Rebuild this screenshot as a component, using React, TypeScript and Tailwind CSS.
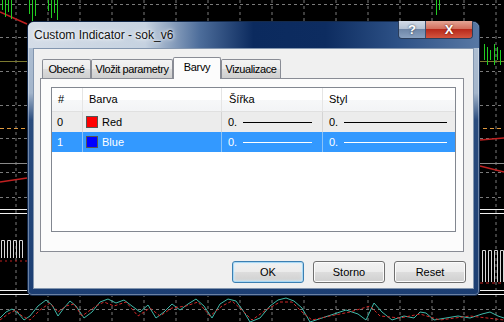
const gridX = Array.from({ length: 16 }, (_, i) => 16 + i * 32);
const gridY = [4, 37, 71, 105, 138, 172, 197, 309];

const wave =
  "M0,318 L6,312 L12,309 L18,313 L24,320 L30,316 L38,306 L46,300 L52,305 L58,316 L64,308 L70,301 L76,306 L84,318 L92,312 L100,302 L108,299 L116,303 L124,300 L132,306 L140,312 L148,305 L156,318 L164,312 L172,304 L180,310 L188,304 L196,299 L204,306 L212,318 L220,304 L228,299 L236,301 L244,312 L250,322 L260,318 L270,306 L278,300 L286,298 L294,301 L302,308 L310,322 L322,318 L334,314 L346,310 L358,314 L366,320 L374,303 L382,312 L392,320 L404,316 L414,318 L420,312 L426,313 L434,320 L446,318 L458,316 L470,318 L482,314 L490,312 L498,316 L504,318";
const waveRed =
  "M0,320 L8,314 L16,310 L22,316 L30,320 L40,310 L50,303 L58,312 L66,306 L74,304 L82,316 L96,306 L104,302 L114,306 L126,302 L138,316 L150,308 L160,316 L172,308 L186,306 L198,302 L210,316 L222,306 L232,301 L242,310 L252,320 L266,310 L280,302 L292,302 L302,312 L312,320 L330,316 L350,312 L370,306 L380,316 L400,318 L420,314 L440,320 L470,316 L504,320";

function ChartBackdrop() {
  return (
    <svg className="absolute inset-0" width="504" height="322" viewBox="0 0 504 322">
      <rect width="504" height="322" fill="#000" />
      {gridX.map((x) => (
        <line key={`v${x}`} x1={x} y1={0} x2={x} y2={322} stroke="#7a7a7a" strokeDasharray="3 3" strokeWidth={1} />
      ))}
      {gridY.map((y) => (
        <line key={`h${y}`} x1={0} y1={y + 0.5} x2={504} y2={y + 0.5} stroke="#7a7a7a" strokeDasharray="3 3" strokeWidth={1} />
      ))}
      <line x1={0} y1={61.5} x2={504} y2={61.5} stroke="#7c7a30" />
      <line x1={0} y1={128.5} x2={504} y2={128.5} stroke="#e09a40" strokeDasharray="4 3" />
      <line x1={0} y1={163.5} x2={504} y2={163.5} stroke="#8a8a8a" />
      <path d="M0,182 L27,178" stroke="#c02020" strokeWidth={1.5} fill="none" />
      <path d="M480,166 L504,172" stroke="#c02020" strokeWidth={1.5} fill="none" />
      <path d="M480,140 L504,138" stroke="#c02020" strokeWidth={1.5} fill="none" />
      <path d="M0,12 L27,24" stroke="#c02020" strokeWidth={1.5} fill="none" />
      {[209.5, 213.5, 290.5, 294.5].map((y) => (
        <line key={`d${y}`} x1={0} y1={y} x2={504} y2={y} stroke="#f0f0f0" strokeWidth={1.2} />
      ))}
      {[1.5, 7.5, 13.5, 19.5].map((x) => (
        <path key={`wl${x}`} d={`M${x},258 V240.5 H${x + 3} V258`} stroke="#d8d8d8" fill="none" />
      ))}
      {[482.5, 488.5, 494.5, 500.5].map((x) => (
        <path key={`wr${x}`} d={`M${x},282 V250.5 H${x + 3} V282`} stroke="#d8d8d8" fill="none" />
      ))}
      <line x1={0} y1={261} x2={27} y2={261} stroke="#c02020" strokeDasharray="2 3" />
      <line x1={480} y1={283} x2={504} y2={283} stroke="#c02020" strokeDasharray="3 3" />
      {[2, 5, 8, 11, 29, 32, 35, 48, 51, 54, 57, 436, 439].map((x, i) => (
        <line key={`g${x}`} x1={x + 0.5} y1={0} x2={x + 0.5} y2={10 + ((i * 7) % 12)} stroke="#22cc22" />
      ))}
      {[484, 487, 490, 494, 497, 500].map((x, i) => (
        <line key={`gr${x}`} x1={x + 0.5} y1={44 + (i % 3) * 3} x2={x + 0.5} y2={60 + (i % 2) * 5} stroke="#22cc22" />
      ))}
      <path d={wave} stroke="#3fb8a8" strokeWidth={1} fill="none" />
      <path d={waveRed} stroke="#d02828" strokeWidth={1} strokeDasharray="3 2" fill="none" />
    </svg>
  );
}

function Tab({ label, width, active }: { label: string; width: string; active?: boolean }) {
  if (active) {
    return (
      <div
        className={`relative z-10 -mb-px flex h-[22px] ${width} items-start justify-center rounded-t-[2px] border border-b-0 border-[#898c95] bg-[#fcfcfc] pt-px tracking-[-0.3px]`}
      >
        {label}
      </div>
    );
  }
  return (
    <div
      className={`flex h-[19px] ${width} items-center justify-center rounded-t-[2px] border border-b-0 border-[#898c95] bg-[linear-gradient(180deg,#f3f3f3_0%,#ebebeb_50%,#dddddd_51%,#cfcfcf_100%)] tracking-[-0.4px]`}
    >
      {label}
    </div>
  );
}

function Swatch({ color }: { color: string }) {
  return <span className={`inline-block h-[12px] w-[12px] border border-[#555] ${color}`} />;
}

function StyleCell({ selected, end }: { selected?: boolean; end: string }) {
  return (
    <div className={`flex items-center pl-[6px] ${end}`}>
      <span>0.</span>
      <span className={`ml-[6px] h-px flex-1 ${selected ? "bg-white" : "bg-black"}`} />
    </div>
  );
}

function Row({ idx, name, color, selected }: { idx: string; name: string; color: string; selected?: boolean }) {
  const sep = selected ? "border-[#8cc4f7]" : "border-[#d4d4d4]";
  return (
    <div
      className={`grid h-[20px] grid-cols-[30px_139px_101px_1fr] ${selected ? "bg-[#3399ff] text-white" : "bg-[#ececec] text-black"}`}
    >
      <div className="flex items-center pl-[5px]">{idx}</div>
      <div className={`flex items-center gap-[4px] border-l pl-[3px] ${sep}`}>
        <Swatch color={color} />
        <span>{name}</span>
      </div>
      <div className={`border-l ${sep}`}>
        <StyleCell selected={selected} end="h-full pr-[10px]" />
      </div>
      <div className={`border-l ${sep}`}>
        <StyleCell selected={selected} end="h-full pl-[4px] pr-[8px]" />
      </div>
    </div>
  );
}

function Btn({ label, focused }: { label: string; focused?: boolean }) {
  return (
    <button
      className={`h-[22px] w-[72px] rounded-[3px] border bg-[linear-gradient(180deg,#f2f2f2_0%,#ebebeb_50%,#dddddd_51%,#cfcfcf_100%)] text-[11px] text-black ${
        focused
          ? "border-[#3c7fb1] shadow-[inset_0_0_0_1px_#a8d8f5,inset_0_0_3px_1px_#d5eefc]"
          : "border-[#707070] shadow-[inset_0_0_0_1px_#fbfbfb]"
      }`}
    >
      {label}
    </button>
  );
}

function Dialog() {
  return (
    <div className="absolute left-[27px] top-[21px] flex h-[275px] w-[453px] flex-col rounded-t-[7px] rounded-b-[5px] border border-[#142a4c] bg-[linear-gradient(180deg,#b4c3d5_0%,#a3b5cb_26%,#2a4c7e_36%,#1c3e72_100%)] shadow-[inset_0_0_0_1px_rgba(255,255,255,0.35)]">
      <div className="flex h-[26px] items-start rounded-t-[6px] bg-[linear-gradient(90deg,rgba(214,222,232,0.95)_0%,rgba(200,212,226,0.9)_26%,rgba(60,95,145,0.85)_38%,#0b2a5e_50%,#0d2c60_66%,#2d5186_82%,#5878a4_100%)] pl-[6px] pr-[6px]">
        <span className="mt-[6px] flex-1 text-[12px] leading-[14px] text-[#111] [text-shadow:0_0_6px_#fff,0_0_3px_#fff]">
          Custom Indicator - sok_v6
        </span>
        <div className="-mt-px flex h-[18px] overflow-hidden rounded-b-[4px] border border-t-0 border-[#2b3d5a]">
          <div className="flex w-[27px] items-center justify-center border-r border-[#3b4f6e] bg-[linear-gradient(180deg,#d3dce8_0%,#b4c2d4_45%,#6f87a8_50%,#8aa1c0_100%)] text-[13px] font-bold leading-none text-white [text-shadow:0_0_2px_#1b2c45]">
            ?
          </div>
          <div className="flex w-[46px] items-center justify-center bg-[linear-gradient(180deg,#e4a595_0%,#d2705e_45%,#b82a1c_50%,#d4553f_100%)] text-[13px] font-bold leading-none text-white [text-shadow:0_0_2px_#4a0c06]">
            X
          </div>
        </div>
      </div>
      <div className="mx-[5px] mb-[6px] flex h-[241px] flex-col border border-[#8396af] bg-[#f0f0f0] px-[6px] pt-[7px] text-[11px] text-black">
        <div className="flex h-[22px] items-end pl-[2px]">
          <Tab label="Obecné" width="w-[49px]" />
          <Tab label="Vložit parametry" width="w-[82px]" />
          <Tab label="Barvy" width="w-[48px]" active />
          <Tab label="Vizualizace" width="w-[60px]" />
        </div>
        <div className="h-[174px] w-[424px] border border-[#898c95] bg-[#fcfcfc] pl-[10px] pr-[7px] pt-[8px]">
          <div className="h-[145px] border border-[#828790] bg-white">
            <div className="grid h-[24px] grid-cols-[30px_139px_101px_1fr] border-b border-[#e0e0e0] bg-[linear-gradient(180deg,#ffffff_0%,#ffffff_50%,#f7f8f9_51%,#f3f4f6_100%)]">
              <div className="flex items-center pl-[6px]">#</div>
              <div className="flex items-center border-l border-[#e5e5e5] pl-[6px]">Barva</div>
              <div className="flex items-center border-l border-[#e5e5e5] pl-[7px]">Šířka</div>
              <div className="flex items-center border-l border-[#e5e5e5] pl-[6px]">Styl</div>
            </div>
            <Row idx="0" name="Red" color="bg-[#ff0000]" />
            <Row idx="1" name="Blue" color="bg-[#0000ff]" selected />
          </div>
        </div>
        <div className="mt-[9px] flex justify-end gap-[9px] pr-px">
          <Btn label="OK" focused />
          <Btn label="Storno" />
          <Btn label="Reset" />
        </div>
      </div>
    </div>
  );
}

export default function App() {
  return (
    <div className="relative h-[322px] w-[504px] overflow-hidden bg-black font-['Liberation_Sans',Arial,sans-serif]">
      <ChartBackdrop />
      <Dialog />
    </div>
  );
}
